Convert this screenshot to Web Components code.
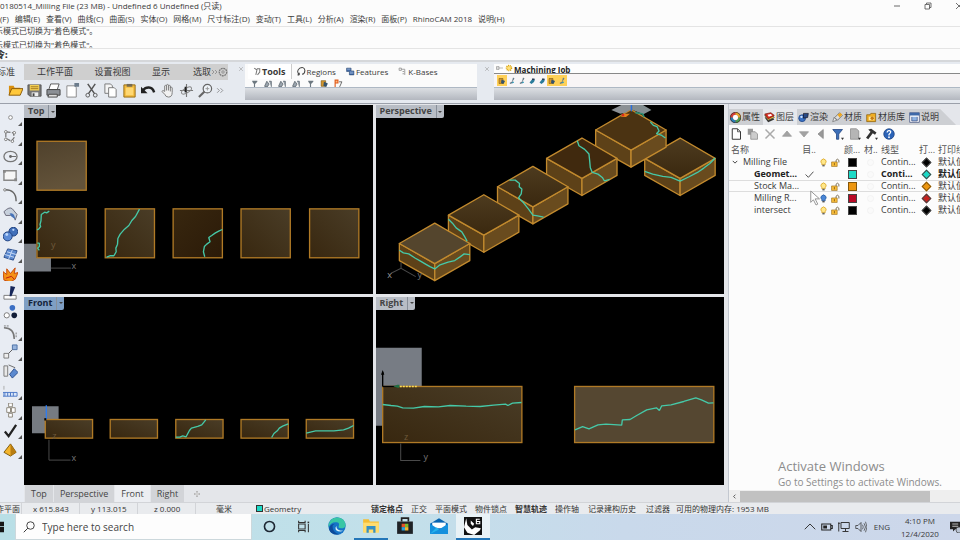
<!DOCTYPE html>
<html lang="zh-CN">
<head>
<meta charset="utf-8">
<title>Milling File</title>
<style>
html,body{margin:0;height:100%}
body{font:9px/12px "Open Sans","Noto Sans CJK SC",sans-serif;color:#3a3a3a;background:#fcfcfc;overflow:hidden}
</style>
</head>
<body>
<cad-app></cad-app>
<script>
const BASE = `*{box-sizing:border-box}
button,input{font:inherit;color:inherit;background:none;border:0;padding:0;margin:0}
button{display:inline-flex;align-items:center;justify-content:center;white-space:nowrap;flex:none}
[hidden]{display:none}`;
function define(name, css, html, setup) {
  customElements.define(name, class extends HTMLElement {
    constructor() {
      super();
      this.attachShadow({mode: 'open'});
    }
    connectedCallback() {
      const t = document.createElement('template');
      t.innerHTML = `<style>${BASE}${css}</style>` + (typeof html === 'function' ? html(this) : html);
      this.shadowRoot.replaceChildren(t.content.cloneNode(true));
      if (setup) setup(this);
    }
  });
}

const ICONS = {
  open: '<path d="M1 13V3h5l1 2h6v2H5z" fill="#d98f0c"/><path d="M1 13 4 6h12l-3 7z" fill="#ffc83a" stroke="#8a5a08"/>',
  save: '<path d="M1 2h14v12H3l-2-2z" fill="#777" stroke="#555"/><path d="M3 2h10v6H3z" fill="#f2cf55"/><path d="M4 4h8M4 6h8" stroke="#a77c20"/><path d="M5 10h7v4H5z" fill="#eee"/><path d="M6 11h2v3H6z" fill="#444"/>',
  print: '<path d="M5 1h9l-2 6H3z" fill="#fff" stroke="#555"/><path d="M1 7h14v6H1z" fill="#8b8f95" stroke="#444"/><path d="M3 12h9v3H2z" fill="#ddd" stroke="#444"/>',
  page: '<path d="M2 3h9l1 2v10H2z" fill="#fff" stroke="#888"/><path d="M10 0h5v4h-5z" fill="#6c7c8c"/>',
  cut: '<path d="M4 1l7 10M12 1 5 11" stroke="#555" stroke-width="1.6"/><circle cx="4" cy="13" r="2" fill="none" stroke="#555"/><circle cx="12" cy="13" r="2" fill="none" stroke="#555"/>',
  copy: '<path d="M2 1h6l2 2v8H2z" fill="#f5f5f5" stroke="#777"/><path d="M6 5h6l2 2v8H6z" fill="#fff" stroke="#777"/>',
  paste: '<path d="M2 2h12v13H2z" fill="#f3bb3e" stroke="#946b14"/><path d="M5 1h6v3H5z" fill="#776b52"/><path d="M4 5h8v8H4z" fill="#ffd873"/>',
  undo: '<path d="M2 8C5 4 12 3 14 10" fill="none" stroke="#222" stroke-width="2.6"/><path d="M0 4v7h7z" fill="#222"/>',
  hand: '<path d="M5 9V3q1-1 2 0V2q1-1 2 0v1q1-1 2 0v2q1-1 2 0v5q0 5-4 5-3 0-4-3L2 9q1-2 3 0z" fill="#f1f1f1" stroke="#777"/><path d="M7 3v5M9 3v5M11 4v5" stroke="#777"/>',
  orbit: '<path d="M8 1v14M1 8h14" stroke="#777" stroke-width="1.2"/><ellipse cx="8" cy="8" rx="6" ry="2.5" transform="rotate(-30 8 8)" fill="none" stroke="#888"/><path d="M7 4v6" stroke="#222" stroke-width="2"/>',
  zoom: '<circle cx="10" cy="6" r="4.5" fill="#eef3f8" stroke="#666" stroke-width="1.3"/><path d="M7 9l-6 6" stroke="#666" stroke-width="2.2"/><path d="M8 6h4M10 4v4" stroke="#999"/>',
  more: '<path d="M2 4l4 4-4 4M8 4l4 4-4 4" fill="none" stroke="#777" stroke-width="1.3"/>',
  gear: '<circle cx="8" cy="8" r="6" fill="none" stroke="#777" stroke-width="2" stroke-dasharray="3 1"/><circle cx="8" cy="8" r="2" fill="none" stroke="#777"/>',
  point: '<circle cx="8" cy="8" r="2" fill="#fff" stroke="#888"/>',
  poly: '<path d="M3 3l8 1 1 5-3 4-6-3z" fill="none" stroke="#777" stroke-dasharray="5 1.5" stroke-width="1.3"/><g fill="#fff" stroke="#777"><circle cx="3" cy="3" r="1.4"/><circle cx="12" cy="4" r="1.4"/><circle cx="3" cy="11" r="1.4"/><circle cx="10" cy="13" r="1.4"/></g>',
  circle: '<ellipse cx="8" cy="8" rx="7" ry="5.5" fill="none" stroke="#777" stroke-width="1.4"/><path d="M8 8h6" stroke="#666"/><circle cx="8" cy="8" r="1.5" fill="#666"/>',
  rect: '<path d="M1 3h13v10H1z" fill="#f6f6f6" stroke="#888" stroke-width="1.5"/><path d="M0 2h3v3H0zM12 11h3v3h-3z" fill="#888"/>',
  arc: '<path d="M1 2q13-1 13 12" fill="none" stroke="#666" stroke-width="1.5"/><circle cx="2" cy="2" r="1.3" fill="#fff" stroke="#777"/>',
  surface: '<path d="M1 5q6-6 9-3l5 6-2 6q-1-5-5-5L3 9z" fill="#c7d0dc" stroke="#667"/><path d="M7 7q5-2 6 6l-4-3z" fill="#4672b8"/>',
  solid: '<circle cx="11" cy="5" r="4.7" fill="#416fb9" stroke="#1c3e7d"/><circle cx="5" cy="10" r="4.8" fill="#5c8bd6" stroke="#1c3e7d"/><circle cx="4" cy="8" r="1.5" fill="#bdd7fa"/><circle cx="11" cy="3" r="1.2" fill="#bdd7fa"/>',
  mesh: '<path d="M5 2l10 2-4 10-10-3z" fill="#5c8ad0" stroke="#2a4d8b"/><path d="M10 3 6 13M4 5l10 3M2 8l10 3" stroke="#c7daf5"/>',
  explode: '<path d="M1 15 0 6l4 3 0-6 4 5 5-6-1 6 4-1-3 7-5 3z" fill="#f59217" stroke="#c64709"/><path d="M3 13l6-2 3 3" stroke="#bb1810" fill="none"/>',
  trim: '<path d="M1 10h13v4H1z" fill="#fff" stroke="#777"/><path d="M8 0l5 1-4 10H7z" fill="#16275a"/>',
  group: '<circle cx="10" cy="3" r="3" fill="#3c6fc4"/><circle cx="4" cy="11" r="2.8" fill="#fff" stroke="#777"/><circle cx="12" cy="11" r="3" fill="#121d38"/>',
  blend: '<path d="M1 3q11 0 11 12" fill="none" stroke="#777" stroke-width="1.6"/><path d="M1 1h5M14 8v6" stroke="#777" stroke-dasharray="2 1"/>',
  scale: '<path d="M1 10h5v5H1z" fill="#eee" stroke="#777"/><path d="M10 1h5v5h-5z" fill="#97b4dd" stroke="#4a6fa5"/><path d="M6 10l4-4" stroke="#555"/>',
  copyrot: '<path d="M1 2h4v11H1z" fill="#e8e8e8" stroke="#777"/><path d="M12 5l4 4-6 6-3-4z" fill="#5c8ad0" stroke="#2a4d8b"/><path d="M6 1l7 3" stroke="#666"/>',
  array: '<path d="M0 9h15v4H0z" fill="#dce7f8" stroke="#4a76c5"/><path d="M2 9v4M5 9v4M8 9v4M11 9v4" stroke="#4a76c5"/><path d="M1 2v4" stroke="#aaa"/>',
  clamp: '<g fill="#fff" stroke="#8a8478"><path d="M6 0h4v4H6zM4 5h4v5H4zM9 5h4v5H9zM6 11h4v4H6z"/></g>',
  check: '<path d="M2 9l4 5L14 2" fill="none" stroke="#222" stroke-width="2.4"/>',
  pyramid: '<path d="M8 2 1 11l7 4 6-4z" fill="#f4b52c" stroke="#7b5608"/><path d="M8 2v13l6-4z" fill="#b97d10"/>',
  wheel: '<circle cx="8" cy="8" r="6" fill="none" stroke="#d43b35" stroke-width="4"/><path d="M8 2a6 6 0 0 1 6 6" fill="none" stroke="#e8a72a" stroke-width="4"/><path d="M14 8a6 6 0 0 1-6 6" fill="none" stroke="#48a153" stroke-width="4"/><path d="M8 14a6 6 0 0 1-6-6" fill="none" stroke="#247fba" stroke-width="4"/><circle cx="8" cy="8" r="3.5" fill="#fff"/><circle cx="8" cy="8" r="7.5" fill="none" stroke="#333"/>',
  layers: '<path d="M1 8l10-2 4 5-9 4z" fill="#333"/><path d="M1 5l10-2 4 5-9 4z" fill="#f6c640" stroke="#554"/><path d="M1 3l9-2 5 4-9 5z" fill="#d8271f" stroke="#721"/><path d="M5 4l5-1 2 2-5 2z" fill="#fff"/>',
  render: '<circle cx="6" cy="9" r="5" fill="#3971c4" stroke="#173c7c"/><path d="M8 2h7l-1 6-6 1z" fill="#274985" stroke="#112"/><circle cx="5" cy="7" r="1.7" fill="#cfe3ff"/>',
  brush: '<path d="M1 14l2-6 4 4z" fill="#eee" stroke="#666"/><path d="M4 8l7-7 4 4-7 7z" fill="#ddd" stroke="#555"/><path d="M8 4l4-3 3 3-4 4z" fill="#f0a71d"/>',
  folder: '<path d="M1 14V4h5l1-2h7v12z" fill="#efad22" stroke="#855b08"/><path d="M4 7h8v5H4z" fill="#ffe8a0"/><circle cx="9" cy="9" r="2.5" fill="#c57b12"/>',
  help2: '<path d="M1 1h14v14H1z" fill="#fff" stroke="#347"/><path d="M1 1h14v4H1z" fill="#3d68a8"/><path d="M4 7v6h8V7" fill="#8fb3e1" stroke="#347"/>',
  new: '<path d="M3 1h7l4 4v10H3z" fill="#fff" stroke="#333" stroke-width="1.3"/><path d="M10 1v4h4" fill="none" stroke="#333"/>',
  dup: '<path d="M1 1h7v8H1z" fill="#999"/><path d="M5 5h6l3 3v7H5z" fill="#ccc" stroke="#888"/>',
  del: '<path d="M2 2l12 12M14 2 2 14" stroke="#aaa" stroke-width="2"/>',
  up: '<path d="M8 4l6 7H2z" fill="#a3a3a3" stroke="#999"/>',
  down: '<path d="M8 12 2 5h12z" fill="#a3a3a3" stroke="#999"/>',
  left: '<path d="M4 8l7-6v12z" fill="#999" stroke="#888"/>',
  filter: '<path d="M1 2h13L9 8v7H6V8z" fill="#3d6fb8" stroke="#1c3f7c"/><path d="M12 13h4l-2 3z" fill="#333"/>',
  sheet: '<path d="M2 1h8l3 3v11H2z" fill="#b5b5b5" stroke="#888"/><path d="M12 13h4l-2 3z" fill="#333"/>',
  hammer: '<path d="M3 2l4-1 7 5-2 3-3-2-6 8-3-2 6-8z" fill="#333"/><path d="M12 13h4l-2 3z" fill="#333"/>',
  help: '<circle cx="8" cy="8" r="7" fill="#2c64b8" stroke="#193f7e"/><path d="M5.5 6q.5-3 3-2.500 3 .8 1 3.300L8 8.500V10" fill="none" stroke="#fff" stroke-width="1.700"/><circle cx="8" cy="12.300" r="1.200" fill="#fff"/>',
  bulb: '<path d="M5 10Q2 7 4 4q4-5 8 0 2 3-1 6v2H5z" fill="#ffe88a" stroke="#d79c17" stroke-width="1.300"/><path d="M6 12h4v3H6z" fill="#666"/>',
  bulboff: '<path d="M5 10Q2 7 4 4q4-5 8 0 2 3-1 6v2H5z" fill="#4a86d6" stroke="#24599f" stroke-width="1.300"/><path d="M6 12h4v3H6z" fill="#555"/>',
  lock: '<path d="M1 7h10v8H1z" fill="#f9bd3b" stroke="#906410"/><path d="M9 7V4q2-4 5 0v4" fill="none" stroke="#776a50" stroke-width="1.700"/><path d="M6 9v4" stroke="#805b14" stroke-width="1.500"/>',
  chev: '<path d="M2 5l6 6 6-6" fill="none" stroke="#333" stroke-width="2.400"/>',
  tick: '<path d="M1 8l5 5 9-10" fill="none" stroke="#333" stroke-width="1.500"/>',
  material: '<circle cx="8" cy="8" r="5.500" fill="#fafafa" stroke="#eee"/>',
  search: '<circle cx="10" cy="6" r="5" fill="none" stroke="#333" stroke-width="1.200"/><path d="M6.500 9.500 1 15" stroke="#333" stroke-width="1.300"/>',
  win: '<path d="M0 1h7v6H0zM8 1h8v6H8zM0 8h7v7H0zM8 8h8v7H8z" fill="#151515"/>',
  cortana: '<circle cx="8" cy="8" r="6.200" fill="none" stroke="#1d2733" stroke-width="2"/>',
  task: '<path d="M2 1v2h8V1M2 15v-2h8v2M2 5h8v6H2zM14 5v10" fill="none" stroke="#333" stroke-width="1.300"/><path d="M13 2h2v2h-2z" fill="#333"/>',
  edge: '<circle cx="8" cy="8" r="7.700" fill="#1673c7"/><path d="M.5 7Q2 0 9 .4q6 .7 6.600 6.600 0 3-4 3-3 0-2-2 1-3-2-3.300Q3 4 .5 9z" fill="#39c6a5"/><path d="M4 8q0 6 6 7.400-7 1-9-4 0-5 5-5.400-2 1-2 2z" fill="#0d4b9b"/><path d="M7.500 8q-.5 4 6 4.300Q10 14 7 11.500 6 9.500 7.500 8z" fill="#dff4fa"/>',
  explorer: '<path d="M1 2h5l1 2h8v9H1z" fill="#f5bd34"/><path d="M1 5h14v9H1z" fill="#ffdc70"/><path d="M4 8h8v6h-2v-3H6v3H4z" fill="#358fc4"/>',
  store: '<path d="M1 4h14v11H1z" fill="#1e2226"/><path d="M5 4V1h6v3" fill="none" stroke="#222" stroke-width="1.500"/><path d="M5 6h3v3H5z" fill="#e45126"/><path d="M8 6h3v3H8z" fill="#7fb62c"/><path d="M5 9h3v3H5z" fill="#2a9fd8"/><path d="M8 9h3v3H8z" fill="#f4b52d"/>',
  mail: '<path d="M0 6l8-5 8 5v9H0z" fill="#0865b3"/><path d="M2 5h12v5H2z" fill="#fff"/><path d="M0 6l8 5 8-5v9H0z" fill="#1590dd"/><path d="M0 15l6-6 2 2z" fill="#26b4ed"/>',
  rhino: '<path d="M0 0h16v16H0z" fill="#111"/><path d="M2 1l1 6 4 4 3-2 5 1-1 2-5 4-6-2-3-5 1-4z" fill="#fff"/><path d="M6 3l3 3-1 2-2-2zM5 11l3 1-2 1z" fill="#fff"/><path d="M14 2h-3v4h3V4h-3" fill="none" stroke="#fff"/>',
  caret: '<path d="M1 11l7-7 7 7" fill="none" stroke="#333" stroke-width="1.300"/>',
  battery: '<path d="M1 4h12v8H1zM13 6h2v4h-2" fill="none" stroke="#222" stroke-width="1.400"/><path d="M3 6h5v4H3z" fill="#222"/>',
  monitor: '<path d="M4 2h11v8H4zM6 14h8M10 10v4M1 2v12M0 3h3" fill="none" stroke="#333" stroke-width="1.300"/>',
  sound: '<path d="M1 6h3l4-4v12l-4-4H1z" fill="none" stroke="#333"/><path d="M10 5q2 3 0 6M12 3q4 5 0 10M14 1q4 7 0 14" fill="none" stroke="#444"/>',
  note: '<path d="M0 1h14v10H7l-3 3v-3H0z" fill="#222"/><path d="M3 4h8M3 7h8" stroke="#eee"/><circle cx="12" cy="12" r="4" fill="#b9c3d2" stroke="#444"/>',
  cone: '<path d="M2 2l5 3-2 9M7 3h5v6l-4 5" fill="none" stroke="#777" stroke-width="1.800"/>',
  region: '<path d="M4 14q-6-7 1-12 8-3 9 4 0 6-5 7M4 14v-4M4 14H1" fill="none" stroke="#444" stroke-width="1.800"/>',
  feature: '<path d="M1 2h8v5h5v7H6V8H1z" fill="#4169a5" stroke="#28456f"/><path d="M2 4h6M7 9h6M7 11h6" stroke="#b9cce8"/>',
  kbase: '<path d="M2 2h4v4H2zM6 4h6v10M8 8h3M8 12h3" fill="none" stroke="#999" stroke-width="1.600"/>',
  mill: '<path d="M1 13l4-9 4 5-3 5zM9 4h4v10" fill="#9aa4ad" stroke="#5a646c" stroke-width="1.400"/>',
  drill: '<path d="M4 3h9v2l-4 4v5H7V9L4 5z" fill="#6d7880"/>',
  pq: '<path d="M2 1v13M2 2h5v5H2" stroke="#e05b1b" stroke-width="2" fill="#ffb980"/><path d="M9 5h5l-4 9" fill="none" stroke="#555" stroke-width="1.500"/>',
  jobs: '<path d="M2 3h8v10H2z" fill="#d5972b" stroke="#6d4a0b"/><path d="M7 5l7 3-3 6-5-2z" fill="#35546e"/>',
  tool: '<path d="M10 1l3 2-4 6 2 2-6 3-2-2 5-3z" fill="#667a88"/><path d="M8 12l4-2" stroke="#2c9fc0" stroke-width="2"/>',
  tool2: '<path d="M3 11l5-6h6l-2 5-5 4z" fill="#2b7c9b"/><path d="M8 3h5v3H8z" fill="#2a3e58"/>',
  sun: '<circle cx="8" cy="8" r="5" fill="#ffe07a" stroke="#d9a313" stroke-width="3" stroke-dasharray="2 1.500"/>',
  tree: '<path d="M1 8h13M1 5h5v6H1z" fill="none" stroke="#777"/>',
  close: '<path d="M3 3l10 10M13 3 3 13" stroke="#999" stroke-width="1.500"/>',
  min: '<path d="M2 8h12" stroke="#444" stroke-width="1.600"/>',
  restore: '<path d="M5 4V2h9v9h-3M2 5h9v9H2z" fill="none" stroke="#444" stroke-width="1.500"/>',
  x: '<path d="M2 2l12 12M14 2 2 14" stroke="#444" stroke-width="1.500"/>',
  plus: '<path d="M8 2v12M2 8h12" stroke="#aaa" stroke-width="3"/><path d="M8 4v8M4 8h8" stroke="#fff"/>',
  cursor: '<path d="M2 0v13l3-3 3 6 2-1-3-6h5z" fill="#fff" stroke="#888"/>'
};
define('ui-icon', ':host{display:inline-block;flex:none;width:12px;height:12px}svg{display:block;width:100%;height:100%}',
  el => `<svg viewBox="0 0 16 16" aria-hidden="true">${ICONS[el.getAttribute('name')] || ''}</svg>`);
const icon = n => `<ui-icon name="${n}"></ui-icon>`;
const iconButton = (n, c = '') => `<button class="${c}" aria-label="${n}">${icon(n)}</button>`;

define('title-bar', `:host{display:flex;align-items:center;height:12px;overflow:hidden;padding:0 0 1px;font-size:8px}
span{flex:1;white-space:nowrap}
nav{display:flex;gap:19px;margin-right:-5px}ui-icon{width:8px;height:8px}button{width:12px}`,
`<span>0180514_Milling File (23 MB) - Undefined 6 Undefined (只读)</span><nav>${['min','restore','x'].map(n => iconButton(n)).join('')}</nav>`);

define('menu-bar', `:host{display:flex;height:15px;align-items:center;gap:6px;white-space:nowrap;border-bottom:1px solid #e4e4e4;font-size:8px}`,
  ['(F)','编辑(E)','查看(V)','曲线(C)','曲面(S)','实体(O)','网格(M)','尺寸标注(D)','变动(T)','工具(L)','分析(A)','渲染(R)','面板(P)','RhinoCAM 2018','说明(H)'].map(t => `<button>${t}</button>`).join(''));

define('command-log', `:host{display:block}
div{height:22px;overflow:hidden;border-bottom:1px solid #e4e4e4;font-size:8px}p{margin:-3px 0 0 -5px;line-height:14px;white-space:nowrap}p+p{margin-top:0}
label{display:flex;height:11px;align-items:center;font-weight:700}b{margin-left:-4px}input{flex:1;height:10px}`,
`<div><p>示模式已切换为"着色模式"。</p><p>示模式已切换为"着色模式"。</p></div><label><b>令:</b><input aria-label="command"></label>`);

define('tool-bars', `:host{display:flex;height:44px;padding:2px 0 3px;background:#e6eaf0;border-top:2px solid #d5d7da;border-bottom:1px solid #9ba0aa}
section{display:flex;flex-direction:column;min-width:0}
.std{width:237px}.std nav{display:flex;background:#cfcfcf;height:17px;width:228px}
.std nav button{width:62px;}.std nav button:first-child{width:24px;padding-right:9px;background:#e6eaf0;justify-content:flex-end}
.std nav .w{width:53px}.std nav .n{width:44px}.std nav .s{width:28px;justify-content:flex-end}
.std nav ui-icon{width:8px;height:8px}.std nav .i{width:8px}.std nav .i+.i ui-icon{width:10px;height:10px}
.tools{display:flex;height:21px;align-items:center;padding-left:6px}.tools button{width:19px;position:relative}.tools ui-icon{width:15px;height:15px}
.tools .m{width:10px}.tools .m ui-icon{width:9px;height:9px}
.gap{width:8px;display:flex;justify-content:center;padding-top:2px}.gap ui-icon{width:6px;height:6px}
.cam{width:232px;background:#fbfbfb}.gap.r{width:17px;padding-left:3px}
.cam nav{display:flex;height:15px;align-items:center;font-size:8px}
.cam nav button{gap:1px;padding:0 5px;height:15px}.cam nav button:first-child{font-weight:700;margin-left:3px;border-right:1px solid #ccc;background:#fff;font-size:9px;gap:0}
.cam ui-icon{width:9px;height:9px}
.cut{display:flex;height:8px;gap:3px;padding-left:4px;overflow:hidden;align-items:flex-start}.cut button{width:11px}
.slab{flex:1;background:linear-gradient(#dcdfe3,#b3b7bf);border-top:1px solid #aeb8c4}
.job{flex:1;background:#f8f5f6}.job header{display:flex;height:10px;overflow:hidden;align-items:flex-start;font-weight:700;border-bottom:1px solid #888;background:#fdfdfd;gap:1px;line-height:11px;font-size:8px;color:#222;padding-left:2px;white-space:nowrap}
.job ui-icon{width:8px;height:8px}.job .row{display:flex;height:13px;padding:1px 3px;align-items:center}.job .row button{width:10px;height:11px}.job .on{background:#ffd057}`,
`<section class="std"><nav><button>标准</button><button>工作平面</button><button class="w">设置视图</button><button class="n">显示</button><button class="s">选取</button>${iconButton('more','i')}${iconButton('gear','i')}</nav>
<div class="tools">${['open','save','print','page','cut','copy','paste','undo','hand','orbit','zoom'].map(n => iconButton(n)).join('')}${iconButton('more','m')}</div></section>
<div class="gap">${icon('close')}</div>
<section class="cam"><nav><button>${icon('cone')}Tools</button><button>${icon('region')}Regions</button><button>${icon('feature')}Features</button><button>${icon('kbase')}K-Bases</button></nav>
<div class="cut">${['drill','mill','mill','mill','drill','jobs','pq'].map(n => iconButton(n)).join('')}</div><div class="slab"></div></section>
<div class="gap r">${icon('close')}</div>
<section class="job"><header>${icon('tree')}${icon('sun')}<span>Machining Job</span></header><div class="row">${iconButton('jobs','on')}${['tool','tool','tool2','tool2'].map(n => iconButton(n)).join('')}${iconButton('jobs','on')}${iconButton('tool','on')}</div><div class="slab"></div></section>`);

define('tool-palette', `:host{display:flex;flex-direction:column;justify-content:space-between;align-items:center;padding:5px 4px 44px 0;background:#e8ecf3}
button{width:20px;height:16px;position:relative}button:not(.no)::after{content:"";position:absolute;right:-2px;bottom:-1px;border:2px solid transparent;border-right-color:#555;border-bottom-color:#555}ui-icon{width:15px;height:15px}`,
  ['point','poly','circle','rect','arc','surface','solid','mesh','explode','trim','group','blend','scale','copyrot','array','clamp','check','pyramid'].map(n => iconButton(n, ['explode','trim','group','copyrot'].includes(n) ? 'no' : '')).join(''));

const orange = 'stroke="#b07a26" stroke-width="4"';
const box = (x, y, w, h, f) => `<rect x="${x}" y="${y}" width="${w}" height="${h}" fill="${f}" ${orange}/>`;
const crack = pts => `<polyline points="${pts}" fill="none" stroke="#46c9a8" stroke-width="4" stroke-linejoin="bevel"/>`;
const axis = (d, labels) => `<path d="${d}" fill="none" stroke="#4a4a4a" stroke-width="3"/>` + labels.map(([t, x, y, c = '#777']) => `<text x="${x}" y="${y}" fill="${c}" font-size="27">${t}</text>`).join('');
const cube = (x, y, top = 'url(#g)') => `<g transform="translate(${x} ${y})" stroke="#c28a2e" stroke-width="4" stroke-linejoin="round"><path d="M0 0 106 60V111L0 51z" fill="#5d4118"/><path d="M106 60 211 0V51L106 111z" fill="#694b1e"/><path d="M0 0 106-61 211 0 106 60z" fill="${top}"/></g>`;
const SCENES = {
  Top: ['72 15 1047 564', box(111,124,148,147,'url(#a)') + '<path d="M72 432h38v42h43v41H72z" fill="#767b82"/>' +
    box(111,327,148,147,'url(#b)') + box(316,327,148,147,'url(#b)') + box(520,327,148,147,'url(#d)') + box(724,327,148,147,'url(#b)') + box(930,327,148,147,'url(#b)') +
    crack('148,334 140,339 134,337 124,344 123,363 120,374 122,380 116,388 111,390') + crack('112,430 118,430 118,440 113,445 118,452') +
    crack('419,328 407,350 396,362 387,377 374,388 361,403 354,416 353,433 348,445 349,456 342,468 330,468 320,472') +
    crack('668,389 657,394 646,400 636,407 627,413 631,426 621,433 614,440 611,456 615,471') +
    axis('M153 505H213', [['x',215,507],['y',153,444,'#6f5a3c']])],
  Perspective: ['0 15 1044 564', cube(805,175) + cube(658,90,'#4b3312') + cube(511,175,'#40290e') + cube(364,260) + cube(217,345) + cube(70,430,'#54452d') +
    '<path d="M705 30 735 15h30v13l-18 10-15 3z" fill="#8b9095"/><path d="M767 15h33l25 15-24 13-34-14z" fill="#838e91"/><path d="M765 12v22" stroke="#276fe0" stroke-width="4"/><path d="M733 50l10-9h18l-12 10z" fill="#e77e19"/><path d="M777 38l22 4 4 9" stroke="#2c8d70" stroke-width="5" fill="none"/><circle cx="740" cy="45" r="4" fill="#dc2b1c"/>' +
    crack('822,66 831,76 842,80 848,93 840,101 854,105 867,114') + crack('603,122 608,137 625,148 638,162 640,181 642,203 648,217 665,222 678,232 684,242 700,238') +
    crack('400,240 417,240 430,250 429,260 437,267 435,281 427,293 442,308 457,327 470,345 484,347 502,351') + crack('217,357 229,369 240,383 257,395 266,410 273,423') +
    crack('70,450 82,458 98,461 118,474 132,482 151,493 163,500 176,506 190,495 216,486 236,481 252,470 264,461 281,463') +
    crack('805,214 829,222 859,229 884,232 911,243 938,230 963,217 982,204 1000,190 1016,174') +
    axis('M45 519 75 504 119 529M75 504v-18', [['x',34,532,'#999'],['y',124,532]])],
  Front: ['72 21 1047 564', '<path d="M96 349h80v40h-40v41H96z" fill="#767b82"/>' +
    box(136,389,142,56,'url(#b)') + box(331,389,142,56,'url(#b)') + box(528,389,142,56,'url(#b)') + box(724,389,142,56,'url(#b)') + box(920,389,142,56,'url(#b)') +
    crack('528,442 540,442 549,438 559,441 569,422 575,415 594,410 606,405 618,390') + crack('816,443 823,431 833,423 839,415 849,409 866,402') + crack('920,430 948,423 1003,423 1032,420 1047,415 1062,407') +
    '<path d="M139 346v43" stroke="#2e7df0" stroke-width="4"/><path d="M133 385h6v7h-6z" fill="#000"/>' + axis('M147 450V511H212', [['x',215,513],['z',157,448,'#6f5a3c']])],
  Right: ['18 21 1044 564', '<path d="M18 173h137v116H38v118H18z" fill="#777c84"/>' +
    box(38,289,417,168,'url(#b)') + box(613,289,417,168,'#554731') + crack('38,343 63,346 82,348 98,353 130,354 163,349 205,350 240,346 288,348 330,349 370,345 406,342 413,346 427,339 454,337') +
    crack('614,419 637,409 656,416 683,404 707,402 754,405 756,389 779,388 799,376 829,359 858,353 867,361 874,347 902,344 940,334 976,323 993,329 1014,339 1029,338') +
    '<path d="M38 289V245M38 289H85" stroke="#000" stroke-width="4"/><path d="M38 240l5 14H33z"/><path d="M70 289l12-5h6v9h-6z" fill="#217044"/><path d="M90 289h50" stroke="#ffe354" stroke-width="4" stroke-dasharray="5 4"/>' +
    axis('M92 460V511H151', [['y',160,509],['z',102,448,'#6f5a3c']])]
};
define('view-port', `:host{display:block;background:#000;position:relative;min-width:0;min-height:0;overflow:hidden}
svg{position:absolute;inset:0;width:100%;height:100%}
header{position:relative;display:inline-flex;height:13px;background:#b8bdc5;color:#444;font-weight:700;vertical-align:top;border-radius:0 0 2px 0}
:host([active]) header{background:#7f9fc4;color:#14233a}
button{padding:0 4px 1px}header button+button{width:8px;padding:0;border-left:1px solid #888f99}
i{border:2px solid transparent;border-top-color:#444;margin-top:2px}`,
  el => { const n = el.getAttribute('name'), [vb, s] = SCENES[n];
    return `<svg viewBox="${vb}" preserveAspectRatio="xMinYMin meet"><defs>
<linearGradient id="a" x2=".3" y2="1"><stop stop-color="#4f412c"/><stop offset="1" stop-color="#63533a"/></linearGradient>
<linearGradient id="b" x1="1" x2="0" y2="1"><stop stop-color="#4a3d27"/><stop offset="1" stop-color="#38270f"/></linearGradient>
<linearGradient id="d" x2="1" y2="1"><stop stop-color="#38270f"/><stop offset="1" stop-color="#2b1a08"/></linearGradient>
<linearGradient id="g" x2="0" y2="1"><stop stop-color="#4d3b1f"/><stop offset="1" stop-color="#3a280f"/></linearGradient></defs>${s}</svg>
<header><button>${n}</button><button aria-label="menu"><i></i></button></header>`; });

define('view-tabs', `:host{display:flex;height:17px;padding-left:1px;background:#e4e6ea;align-items:stretch;gap:1px}
button{padding:0 6px;background:#d2d4d8;color:#444}.on{background:#eceef2}.add{background:none;padding:0 8px}ui-icon{width:8px;height:8px}`,
`<button>Top</button><button>Perspective</button><button class="on">Front</button><button>Right</button><button class="add" aria-label="add">${icon('plus')}</button>`);

const rows = [
  ['Milling File', 1, '', 'bulb', '#000', '#000', ''],
  ['Geomet...', 0, 'tick', '', '#1cd9c6', '#1cd9c6', 'cur'],
  ['Stock Ma...', 0, '', 'bulb', '#ed960f', '#ed960f', 'hot'],
  ['Milling R...', 0, '', 'bulboff', '#b90a26', '#c5221f', ''],
  ['intersect', 0, '', 'bulb', '#000', '#000', '']
];
define('layer-panel', `:host{display:flex;flex-direction:column;background:#fcfcfc;position:relative;overflow:hidden;min-width:0;border-left:1px solid #c3c8d0}
nav{display:flex;height:21px;padding:5px 0 0;background:#e4e6eb}nav div{display:flex;background:#cdcfd3;height:16px;padding-right:14px;clip-path:polygon(0 0,93% 0,100% 100%,0 100%)}
nav button{gap:1px;padding:0 3px 0 1px}nav .on{background:#e6e8ec}nav ui-icon{width:11px;height:11px}
.bar{display:flex;height:19px;align-items:center;gap:5px;padding:0 0 2px 1px}.bar ui-icon{width:12px;height:12px}
table{table-layout:fixed;width:252px;border-collapse:collapse;flex:none}
th,td{padding:0 0 0 2px;height:12px;line-height:12px;text-align:left;font-weight:400;white-space:nowrap;overflow:hidden;vertical-align:middle}
th{color:#555}td.n{padding-left:25px}td.n.root{padding-left:3px}td.n span{display:inline-flex;gap:5px;align-items:center}td.i,th.i{padding:0;text-align:center}
td ui-icon{width:9px;height:9px;display:block;margin:auto}.root ui-icon{width:6px;height:6px;margin:0}
.cur td{font-weight:700;color:#222}.hot td{box-shadow:inset 0 1px #ddd,inset 0 -1px #ddd}
.sw{display:block;width:9px;height:9px;margin:auto;border:1px solid #444}.dia{display:block;width:7px;height:7px;margin:auto;transform:rotate(45deg);border:1px solid #444}
.hot .sw,.hot .dia{border-color:#84560a}
.ptr{position:absolute;left:80px;top:86px;width:14px;height:16px}
.wm{position:absolute;left:49px;bottom:13px;color:#8c8c8c;white-space:nowrap;font-size:10px;line-height:14px}.wm strong{display:block;font-weight:400;font-size:13px;line-height:18px}
.scroll{margin-top:auto;display:flex;height:12px;background:#eee;align-items:center}.scroll ui-icon{width:5px;height:5px;transform:rotate(90deg)}.scroll button{width:11px}.scroll i{flex:1;background:#c1c1c1;height:11px;margin-right:30px}`,
`<nav><div>${[['wheel','属性'],['layers','图层'],['render','渲染'],['brush','材质'],['folder','材质库'],['help2','说明']].map(([i, t], k) => `<button class="${k === 1 ? 'on' : ''}">${icon(i)}${t}</button>`).join('')}</div></nav>
<div class="bar">${['new','dup','del','up','down','left','filter','sheet','hammer','help'].map(n => iconButton(n)).join('')}</div>
<table><colgroup><col style="width:72px"><col style="width:16px"><col style="width:12px"><col style="width:13px"><col style="width:20px"><col style="width:17px"><col style="width:38px"><col style="width:19px"><col style="width:45px"></colgroup>
<thead><tr><th>名称</th><th class="i">目..</th><th></th><th></th><th>颜...</th><th>材..</th><th>线型</th><th>打...</th><th>打印线宽</th></tr></thead><tbody>
${rows.map(([n, root, t, b, c, d, cls]) => `<tr class="${cls}"><td class="n ${root ? 'root' : ''}"><span>${root ? icon('chev') : ''}${n}</span></td><td class="i">${t ? icon(t) : ''}</td><td class="i">${b ? icon(b) : ''}</td><td class="i">${b ? icon('lock') : ''}</td><td class="i"><span class="sw" style="background:${c}"></span></td><td class="i">${icon('material')}</td><td>${cls === 'cur' ? 'Conti...' : 'Contin...'}</td><td class="i"><span class="dia" style="background:${d}"></span></td><td>默认值</td></tr>`).join('')}</tbody></table>
<ui-icon class="ptr" name="cursor"></ui-icon>
<div class="wm"><strong>Activate Windows</strong>Go to Settings to activate Windows.</div>
<div class="scroll"><button aria-label="scroll left">${icon('chev')}</button><i></i></div>`);

define('status-bar', `:host{display:flex;height:12px;background:#e9ebee;border-top:1px solid #d2d4d8;font-size:8px;line-height:11px;white-space:nowrap;overflow:hidden;color:#333}
span{flex:none}.pos{width:58px;padding-left:11px;border-left:1px solid #d2d4d8}.first{width:21px;margin-left:-4px;margin-right:4px}.z{padding-left:16px}.unit{width:61px;padding-left:20px}
.lay{display:flex;gap:1px;align-items:center;width:115px}.lay i{width:7px;height:7px;background:#1cd9c6;border:1px solid #333}
.snap{width:40px}.sm{width:24px}.w{width:58px}.md{width:33px}.fl{width:30px}.b{font-weight:700}`,
`<span class="first">作平面</span><span class="pos">x 615.843</span><span class="pos">y 113.015</span><span class="pos z">z 0.000</span><span class="pos unit">毫米</span><span class="lay"><i></i>Geometry</span>
<span class="snap b">锁定格点</span><span class="sm">正交</span><span class="snap">平面模式</span><span class="snap">物件锁点</span><span class="snap b">智慧轨迹</span><span class="md">操作轴</span><span class="w">记录建构历史</span><span class="fl">过滤器</span><span>可用的物理内存: 1953 MB</span>`);

define('task-bar', `:host{display:flex;height:26px;background:linear-gradient(90deg,#b9dfe6,#c2e0ea 40%,#c9d9eb 65%,#cdd7ea);align-items:stretch;overflow:hidden}
.start{width:15px;justify-content:flex-start;overflow:hidden}.start ui-icon{margin-left:-8px}
label{display:flex;align-items:center;width:237px;background:#fdfdfd;padding-left:7px;gap:7px;font-size:10px;border:1px solid #ccd8dc;border-top:0}label ui-icon{width:12px;height:12px}
input{flex:1;min-width:0;height:20px;outline:0}input::placeholder{color:#444;opacity:1}
.app{width:34px;border-bottom:2px solid transparent}.app ui-icon{width:18px;height:18px}.app.s ui-icon{width:13px;height:13px}.run{border-bottom-color:#2376b8}.act{background:#e9f2f6}
.tray{margin-left:auto;display:flex;align-items:center;gap:5px;font-size:8px}.tray ui-icon{width:12px;height:12px}.tray span{margin-left:2px}
time{width:50px;text-align:center;line-height:13px}.note{margin-right:-2px}`,
`<button class="start" aria-label="start">${icon('win')}</button><label>${icon('search')}<input placeholder="Type here to search" aria-label="Type here to search"></label>
${[['cortana','s'],['task','s'],['edge',''],['explorer','run'],['store',''],['mail',''],['rhino','run act']].map(([n, c]) => iconButton(n, 'app ' + c)).join('')}
<div class="tray">${['caret','battery','monitor','sound'].map(n => iconButton(n)).join('')}<span>ENG</span><time>4:10 PM<br>12/4/2020</time>${iconButton('note','note')}</div>`);

define('cad-app', `:host{display:flex;flex-direction:column;height:100vh}
main{flex:1;min-height:0;display:grid;grid-template-columns:minmax(0,728fr) minmax(0,232fr);background:#e4e6ea}
.work{display:grid;grid-template-columns:24px 1fr;grid-template-rows:1fr auto;min-height:0;padding-right:4px}
tool-palette{grid-row:1/3}.views{display:grid;grid-template-columns:1fr 1fr;grid-template-rows:1fr 1fr;gap:3px;min-height:0;padding-top:1px}`,
`<title-bar></title-bar><menu-bar></menu-bar><command-log></command-log><tool-bars></tool-bars>
<main><div class="work"><tool-palette></tool-palette><div class="views"><view-port name="Top"></view-port><view-port name="Perspective"></view-port><view-port name="Front" active></view-port><view-port name="Right"></view-port></div><view-tabs></view-tabs></div><layer-panel></layer-panel></main>
<status-bar></status-bar><task-bar></task-bar>`);
</script>
</body>
</html>
